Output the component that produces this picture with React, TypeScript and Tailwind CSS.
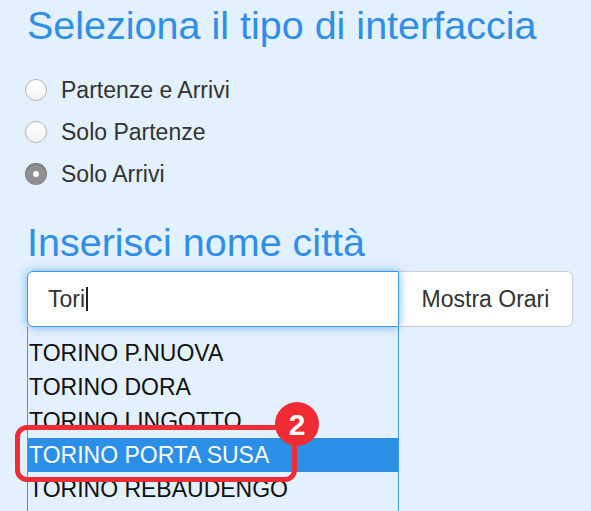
import React from 'react';

const MODES = [
  { label: 'Partenze e Arrivi', checked: false },
  { label: 'Solo Partenze', checked: false },
  { label: 'Solo Arrivi', checked: true },
];

const STATIONS = [
  'TORINO P.NUOVA',
  'TORINO DORA',
  'TORINO LINGOTTO',
  'TORINO PORTA SUSA',
  'TORINO REBAUDENGO',
];

function Radio({ checked }: { checked: boolean }) {
  if (checked) {
    return (
      <span className="flex h-[22px] w-[22px] shrink-0 items-center justify-center rounded-full bg-[#8f8f8f] shadow-[inset_0_1px_2px_rgba(0,0,0,0.25)]">
        <span className="h-[6px] w-[6px] rounded-full bg-white" />
      </span>
    );
  }
  return (
    <span className="h-[22px] w-[22px] shrink-0 rounded-full border border-[#b5b5b5] bg-gradient-to-b from-white to-[#f4f4f4]" />
  );
}

export default function App() {
  return (
    <div className="relative h-[511px] w-full overflow-hidden bg-[#e3f0fd] pl-[25px] font-['Liberation_Sans',Arial,sans-serif]">
      <h3 className="mt-[4px] pl-[2px] text-[39.5px] leading-[43px] text-[#2f8fe8]">
        Seleziona il tipo di interfaccia
      </h3>

      {/* Interface type */}
      <div className="mt-[26px] flex flex-col gap-[8px]">
        {MODES.map((m) => (
          <label key={m.label} className="flex h-[34px] items-center gap-[14px] text-[23px] leading-[34px] text-[#333]">
            <Radio checked={m.checked} />
            <span>{m.label}</span>
          </label>
        ))}
      </div>

      <h3 className="mt-[30px] pl-[2px] text-[39.5px] leading-[43px] text-[#2f8fe8]">
        Inserisci nome città
      </h3>

      {/* Search */}
      <div className="ml-[2px] mt-[7px] flex h-[56px] w-[546px]">
        <div className="relative z-10 flex w-[372px] items-center rounded-l-[6px] border-[1.5px] border-[#3d97ea] bg-white pl-[20px] text-[23px] text-[#333] shadow-[0_0_10px_rgba(60,150,235,0.7)]">
          <span>Tori</span>
          <span className="ml-[1px] h-[24px] w-[1.5px] bg-[#222]" />
        </div>
        <button className="flex w-[174px] items-center justify-center rounded-r-[6px] border border-l-0 border-[#cfcfcf] bg-white text-[23px] text-[#333]">
          Mostra Orari
        </button>
      </div>

      {/* Suggestions */}
      <div className="ml-[2px] h-[200px] w-[372px] border-x-[1.5px] border-[#3d97ea] pt-[9px]">
        {STATIONS.map((s, i) => (
          <div
            key={s}
            className={
              i === 3
                ? 'h-[34px] bg-[#2b8fe7] pl-[1px] text-[23px] leading-[34px] text-white'
                : 'h-[34px] pl-[1px] text-[23px] leading-[34px] text-[#111]'
            }
          >
            {s}
          </div>
        ))}
      </div>

      {/* Annotation */}
      <div className="absolute left-[15px] top-[425px] h-[57px] w-[282px] rounded-[12px] border-[5px] border-[#ef2b34]" />
      <div className="absolute left-[275px] top-[402px] flex h-[44px] w-[44px] items-center justify-center rounded-full bg-[#ef2b34] text-[30px] font-bold text-white">
        2
      </div>
    </div>
  );
}
